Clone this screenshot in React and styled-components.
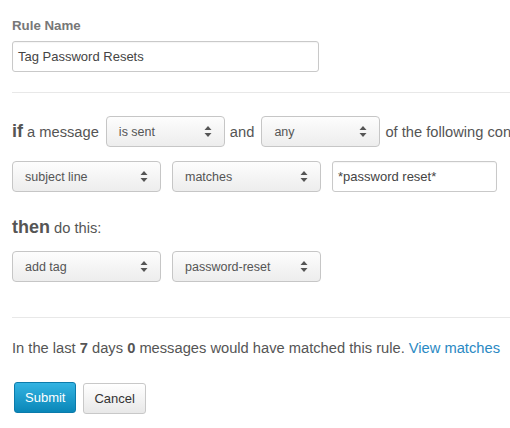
import styled, { createGlobalStyle } from "styled-components"

const GlobalStyle = createGlobalStyle`
  html, body {
    margin: 0;
    padding: 0;
    background: #fff;
  }
  body {
    font-family: "Liberation Sans", Arial, sans-serif;
    color: #555;
  }
`

const Page = styled.div`
  width: 510px;
  height: 428px;
  box-sizing: border-box;
  padding: 17px 0 0 12px;
  overflow: hidden;
`

const Label = styled.div`
  font-size: 13.3px;
  font-weight: bold;
  color: #777;
  line-height: 18px;
  margin-bottom: 6px;
`

const TextInput = styled.div`
  box-sizing: border-box;
  width: ${p => p.$w}px;
  height: 31px;
  border: 1px solid #c9c9c9;
  border-radius: 3px;
  padding: 0 5px;
  display: flex;
  align-items: center;
  font-size: 13px;
  color: #444;
  background: #fff;
  box-shadow: inset 0 1px 1px rgba(0,0,0,0.04);
`

const Divider = styled.div`
  height: 1px;
  background: #e8e8e8;
  margin: ${p => p.$m};
`

const Row = styled.div`
  display: flex;
  align-items: center;
  white-space: nowrap;
  gap: ${p => p.$gap || 0}px;
  margin-top: ${p => p.$top || 0}px;
`

const Lead = styled.span`
  font-size: 14.7px;
  color: #555;
  margin-left: ${p => p.$ml || 0}px;
  margin-right: ${p => p.$mr || 0}px;
`

const Key = styled.strong`
  font-size: 18px;
  color: #555;
  margin-right: 4px;
`

const SelectBox = styled.div`
  box-sizing: border-box;
  flex: none;
  width: ${p => p.$w}px;
  height: 31px;
  border: 1px solid #c6c6c6;
  border-radius: 4px;
  background: linear-gradient(#fdfdfd, #ededed);
  display: flex;
  align-items: center;
  justify-content: space-between;
  padding: 0 12px 0 12px;
  font-size: 12.5px;
  color: #555;
`

const Heading = styled.div`
  margin-top: 25px;
  line-height: 20px;
  display: flex;
  align-items: baseline;
`

const Info = styled.p`
  margin: 0;
  font-size: 14.7px;
  line-height: 20px;
  color: #555;
  white-space: nowrap;
  b { font-weight: bold; color: #555; }
`

const Link = styled.a`
  color: #2a89c3;
  text-decoration: none;
`

const Actions = styled.div`
  display: flex;
  align-items: flex-start;
  gap: 7px;
  margin: 24px 0 0 2px;
`

const Button = styled.button`
  box-sizing: border-box;
  height: 31px;
  padding: 0 10px;
  font-family: inherit;
  font-size: 13px;
  border-radius: 3px;
  cursor: pointer;
  color: ${p => p.$primary ? "#fff" : "#333"};
  border: 1px solid ${p => p.$primary ? "#0b7bab" : "#c8c8c8"};
  background: ${p => p.$primary
    ? "linear-gradient(#33b3e2, #0a87b8)"
    : "linear-gradient(#ffffff, #e8e8e8)"};
  margin-top: ${p => p.$primary ? 0 : 1}px;
`

const Arrows = () => (
  <svg width="8" height="11" viewBox="0 0 8 11">
    <path d="M4 0 L7.5 4 H0.5 Z M4 11 L7.5 7 H0.5 Z" fill="#555" />
  </svg>
)

const Select = ({ w, children }) => (
  <SelectBox $w={w}>
    <span>{children}</span>
    <Arrows />
  </SelectBox>
)

export default function App() {
  return (
    <>
      <GlobalStyle />
      <Page>
        <Label>Rule Name</Label>
        <TextInput $w={307}>Tag Password Resets</TextInput>
        <Divider $m="20px 0 23px" />

        <Row>
          <Key>if</Key>
          <Lead $mr={7}>a message</Lead>
          <Select w={119}>is sent</Select>
          <Lead $ml={5} $mr={7}>and</Lead>
          <Select w={119}>any</Select>
          <Lead $ml={5}>of the following conditions:</Lead>
        </Row>
        <Row $gap={11} $top={14}>
          <Select w={149}>subject line</Select>
          <Select w={149}>matches</Select>
          <TextInput $w={165}>*password reset*</TextInput>
        </Row>

        <Heading>
          <Key>then</Key>
          <Lead>do this:</Lead>
        </Heading>
        <Row $gap={11} $top={13}>
          <Select w={149}>add tag</Select>
          <Select w={149}>password-reset</Select>
        </Row>

        <Divider $m="35px 0 20px" />
        <Info>
          In the last <b>7</b> days <b>0</b> messages would have matched this rule.{" "}
          <Link href="#">View matches</Link>
        </Info>
        <Actions>
          <Button $primary>Submit</Button>
          <Button>Cancel</Button>
        </Actions>
      </Page>
    </>
  )
}
